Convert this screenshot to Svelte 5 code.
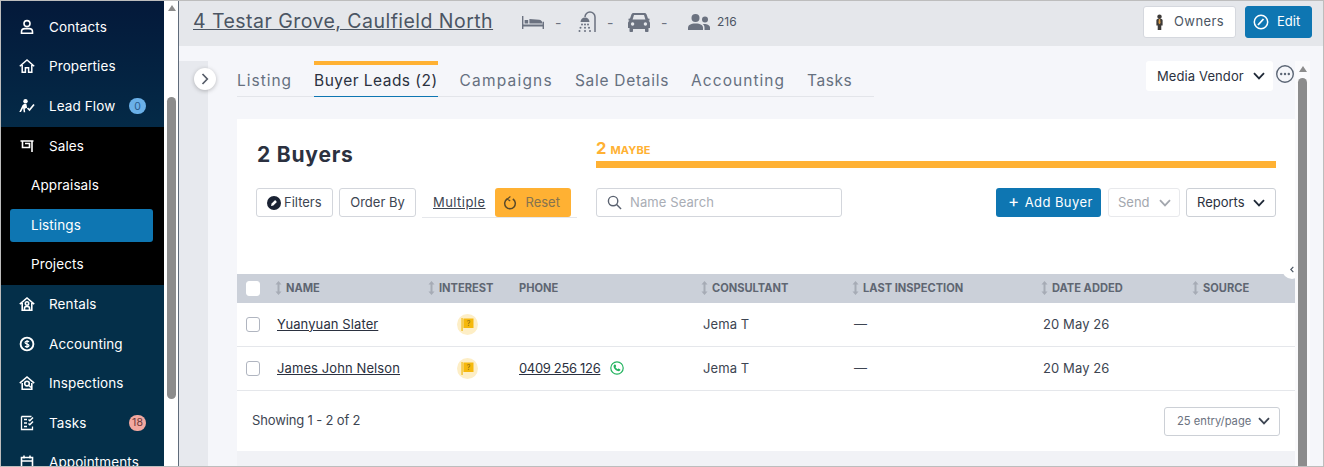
<script>
  const nav1 = [
    { label: 'Contacts', icon: 'contact' },
    { label: 'Properties', icon: 'home' },
    { label: 'Lead Flow', icon: 'lead', badge: '0', tone: 'blue' }
  ];
  const nav2 = [
    { label: 'Rentals', icon: 'rental' },
    { label: 'Accounting', icon: 'money' },
    { label: 'Inspections', icon: 'inspect' },
    { label: 'Tasks', icon: 'tasks', badge: '18', tone: 'red' },
    { label: 'Appointments', icon: 'cal' }
  ];
  const tabs = [
    { t: 'Listing', ls: 0.98 },
    { t: 'Buyer Leads (2)', ls: 0.47 },
    { t: 'Campaigns', ls: 1.2 },
    { t: 'Sale Details', ls: 0.72 },
    { t: 'Accounting', ls: 1.05 },
    { t: 'Tasks', ls: 0.55 }
  ];
  const cols = [
    { t: 'NAME', s: 1 }, { t: 'INTEREST', s: 1 }, { t: 'PHONE', s: 0 }, { t: 'CONSULTANT', s: 1 },
    { t: 'LAST INSPECTION', s: 1 }, { t: 'DATE ADDED', s: 1 }, { t: 'SOURCE', s: 1 }
  ];
  const rows = [
    { name: 'Yuanyuan Slater', phone: '' },
    { name: 'James John Nelson', phone: '0409 256 126' }
  ];
</script>

{#snippet navIcon(k)}
  <svg class="nav-ic" viewBox="0 0 16 16" fill="none" stroke="#fff" stroke-width="1.6">
    {#if k === 'contact'}
      <circle cx="8" cy="4.6" r="3"/><path d="M2.500 14.200v-1.400c0-2 1.600-3.200 3.400-3.200h4.200c1.800 0 3.400 1.200 3.400 3.200v1.400z"/>
    {:else if k === 'home'}
      <path d="M.8 8.200L8 2l7.200 6.200M3.200 7v7.200h3.200v-4.400h3.200v4.400h3.200V7" stroke-width="1.500"/>
    {:else if k === 'lead'}
      <circle cx="6.500" cy="3.300" r="2.200" fill="#fff" stroke="none"/><path d="M3.500 7.200c1-1.600 3-2 4-1l.6 3.500-2.300 1 .4 3.600H4.700l-.6-4.200L2 14H.3z" fill="#fff" stroke="none"/><path d="M8.500 10l2 2L15 6.500" stroke-width="1.700"/>
    {:else if k === 'sales'}
      <path d="M1.500 3h13M3.500 3v6.500h7V5.500H6M13 3v11"/>
    {:else if k === 'rental'}
      <path d="M.8 8.200L8 2l7.200 6.200M3.200 7v7.200h9.600V7"/><circle cx="8" cy="7.500" r="1.700"/><path d="M5.500 14v-2c0-1 1-1.500 2.500-1.500s2.500.5 2.500 1.500v2"/>
    {:else if k === 'money'}
      <circle cx="8" cy="8" r="6.400" stroke-width="1.900"/><path d="M10 5.800C9.400 5 6 4.800 6 6.600c0 1.900 4 1 4 2.900 0 1.800-3.400 1.600-4 .7M8 4v8" stroke-width="1.200"/>
    {:else if k === 'inspect'}
      <path d="M.8 8.200L8 2l7.200 6.200M3.200 8v6.200h9.600V8"/><circle cx="8" cy="8.600" r="2.300"/><path d="M10 10.500l2 2"/>
    {:else if k === 'tasks'}
      <path d="M2.500 1.500h10M2.500 1.500v13h11v-3" stroke-width="1.300"/><path d="M5 4.500h3M5 8h3M5 11.500h3" stroke-width="1.700"/><path d="M9.500 4.500l1.300 1.300L14 2.500M9.500 8.500l1.300 1.300L14 6.500" stroke-width="1.500"/>
    {:else}
      <path d="M2.500 3.500h11v10h-11zM2.500 7h11M5 1.500v3M11 1.500v3"/>
    {/if}
  </svg>
{/snippet}

{#snippet navRow(it)}
  <a class="nav-item" href="#x">
    {@render navIcon(it.icon)}
    <span class="nav-label">{it.label}</span>
    {#if it.badge}<span class="badge {it.tone}">{it.badge}</span>{/if}
  </a>
{/snippet}

{#snippet chevron(c)}
  <svg class="chev" viewBox="0 0 12 8" fill="none" stroke={c} stroke-width="1.800"><path d="M1 1.200l5 5.200 5-5.200"/></svg>
{/snippet}

{#snippet sortIc()}
  <svg class="sort" viewBox="0 0 7 14" fill="#a6abb5"><path d="M3.500 0L6.500 3.500h-2v7h2L3.500 14 .5 10.500h2v-7h-2z"/></svg>
{/snippet}

<div class="page">
  <aside class="side">
    <nav class="nav">
      <div class="g1">{#each nav1 as it}{@render navRow(it)}{/each}</div>
      <div class="g-sales">
        {@render navRow({ label: 'Sales', icon: 'sales' })}
        <a class="sub" href="#x">Appraisals</a>
        <a class="sub active" href="#x">Listings</a>
        <a class="sub" href="#x">Projects</a>
      </div>
      <div class="g2">{#each nav2 as it}{@render navRow(it)}{/each}</div>
    </nav>
    <div class="side-scroll">
      <span class="arrow"></span>
      <span class="thumb"></span>
    </div>
  </aside>

  <main class="main">
    <header class="top">
      <a class="addr" href="#x">4 Testar Grove, Caulfield North</a>
      <div class="stats">
        <svg class="st bed" viewBox="0 0 22 13" fill="#6b7280"><path d="M0 0h1.400v8.600h19.200V5.800H22V13h-1.400v-2.600H1.400V13H0z"/><path d="M2.600 4h3.600v3.400H2.600zM7.400 3l9.800.8c1.600.2 3 1.200 3.400 3.600H7.400z"/></svg>
        <span class="dash">-</span>
        <svg class="st sh" viewBox="0 0 19 21" fill="none" stroke="#6b7280" stroke-width="1.500"><path d="M18 21V6a5 5 0 0 0-10 0"/><path d="M3.500 11c0-2.800 2-4.600 4.500-4.600s4.500 1.800 4.500 4.600z" fill="#6b7280" stroke="none"/><g fill="#6b7280" stroke="none"><circle cx="5" cy="13.500" r="1"/><circle cx="8" cy="13.500" r="1"/><circle cx="11" cy="13.500" r="1"/><circle cx="3.500" cy="16.800" r="1"/><circle cx="8" cy="16.800" r="1"/><circle cx="12" cy="16.800" r="1"/><circle cx="2.500" cy="20" r="1"/><circle cx="8" cy="20" r="1"/><circle cx="13" cy="20" r="1"/></g></svg>
        <span class="dash">-</span>
        <svg class="st car" viewBox="0 0 22 19"><path fill="#6b7280" fill-rule="evenodd" d="M5.500 0h11c1 0 1.800.6 2.100 1.500L20 5.500l1.500.2v1.800l-1 .3c.9.600 1.500 1.500 1.500 2.600V15h-1.500v3.200a.8.8 0 0 1-.8.8h-1.900a.8.8 0 0 1-.8-.8V16H5v2.200a.8.8 0 0 1-.8.8H2.300a.8.8 0 0 1-.8-.8V15H0v-4.600c0-1.100.6-2 1.500-2.600l-1-.3V5.700L2 5.500l1.400-4C3.700.6 4.500 0 5.500 0zm.5 2L4.600 6.500h12.800L16 2z"/><circle cx="4.600" cy="11" r="1.700" fill="#e5e7eb"/><circle cx="17.400" cy="11" r="1.700" fill="#e5e7eb"/></svg>
        <span class="dash">-</span>
        <svg class="st ppl" viewBox="0 0 22 16" fill="#6b7280"><circle cx="7.500" cy="4" r="4"/><path d="M0 16v-2c0-3 2.500-4.500 7.500-4.500S15 11 15 14v2z"/><circle cx="17" cy="5.500" r="3"/><path d="M16.500 16v-2.500c0-1.500-.6-2.700-1.800-3.500 3.800-.4 7.300.8 7.300 3.500V16z"/></svg>
        <span class="count">216</span>
      </div>
      <div class="top-actions">
        <button class="btn owners">
          <svg class="own" viewBox="0 0 10 18" fill="#3e3b39"><circle cx="5" cy="3" r="2.500"/><path d="M1.500 7c0-1 1-1.500 2-1.500h3c1 0 2 .5 2 1.500v6H7v5H3v-5H1.500z"/><path d="M4.300 5.500h1.400l.5 4.500L5 11.500 3.800 10z" fill="#d99a45"/></svg>
          <span>Owners</span>
        </button>
        <button class="btn edit">
          <svg class="ban" viewBox="0 0 16 16" fill="none" stroke="#fff" stroke-width="1.500"><circle cx="8" cy="8" r="6.700"/><path d="M5 11l5.500-6" stroke-width="1.800"/></svg>
          <span>Edit</span>
        </button>
      </div>
    </header>

    <div class="body">
      <div class="strip"></div>
      <button class="toggle" aria-label="Expand">
        <svg viewBox="0 0 8 12" fill="none" stroke="#555c68" stroke-width="1.700"><path d="M1.500 1l4.800 5-4.800 5"/></svg>
      </button>
      <div class="content">
        <div class="tabs-row">
          <div class="tabs">
            {#each tabs as t, i}
              <a class="tab" class:on={i === 1} style="letter-spacing: {t.ls}px" href="#x">{t.t}</a>
            {/each}
          </div>
          <div class="vendor">Media Vendor {@render chevron('#1f2937')}</div>
          <svg class="dots" viewBox="0 0 20 20" fill="none" stroke="#5c6675" stroke-width="1.400"><circle cx="10" cy="10" r="8.300"/><g fill="#5c6675" stroke="none"><circle cx="6.200" cy="10" r="1.200"/><circle cx="10" cy="10" r="1.200"/><circle cx="13.800" cy="10" r="1.200"/></g></svg>
        </div>

        <section class="card">
          <div class="card-top">
            <div class="ctl-col">
              <h2>2 Buyers</h2>
              <div class="filters">
                <button class="btn-o flt">
                  <svg class="pen" viewBox="0 0 14 14"><circle cx="7" cy="7" r="7" fill="#1a2233"/><path d="M4 10l.6-2.400 3.500-3.500 1.800 1.800-3.500 3.500z" fill="#fff"/></svg>
                  <span>Filters</span>
                </button>
                <button class="btn-o order"><span>Order By</span></button>
                <div class="multi">
                  <a class="mul" href="#x">Multiple</a>
                  <button class="reset">
                    <svg class="rs" viewBox="0 0 14 14" fill="none" stroke="#5a4a2a" stroke-width="1.500"><path d="M4.200 3A5.300 5.300 0 1 0 9.800 3"/><path d="M7.400 .6L4.200 3l3 2" stroke-width="1.200"/></svg>
                    <span>Reset</span>
                  </button>
                </div>
              </div>
            </div>
            <div class="right-col">
              <div class="maybe">
                <div class="maybe-t"><b>2</b><span>MAYBE</span></div>
                <div class="maybe-bar"></div>
              </div>
              <div class="tools">
                <div class="search">
                  <svg class="mag" viewBox="0 0 16 16" fill="none" stroke="#5a6270" stroke-width="1.500"><circle cx="6.500" cy="6.500" r="5"/><path d="M10.200 10.200l4.800 4.800"/></svg>
                  <span>Name Search</span>
                </div>
                <div class="tools-r">
                  <button class="add"><span class="plus">+</span><span class="add-t">Add Buyer</span></button>
                  <button class="btn-o send"><span>Send</span> {@render chevron('#a3a7ae')}</button>
                  <button class="btn-o reports"><span>Reports</span> {@render chevron('#1f2937')}</button>
                </div>
              </div>
            </div>
          </div>

          <div class="table">
            <div class="tr head">
              <div class="cell chk"><span class="box hbox"></span></div>
              {#each cols as c}
                <div class="cell th">{#if c.s}{@render sortIc()}{/if}<span>{c.t}</span></div>
              {/each}
            </div>
            {#each rows as r}
              <div class="tr row">
                <div class="cell chk"><span class="box"></span></div>
                <div class="cell nm"><a href="#x">{r.name}</a></div>
                <div class="cell ctr">
                  <span class="flag">
                    <svg viewBox="0 0 13 13"><path d="M.5 0h1.100v13H.5z" fill="#f0b400"/><path d="M2.400 .5h10.100v9.500H2.400z" fill="#f5b80c"/><text x="7.500" y="7.800" font-size="7" text-anchor="middle" fill="#8a6a10" font-family="Inter">?</text></svg>
                  </span>
                </div>
                <div class="cell ph">
                  {#if r.phone}
                    <a href="#x">{r.phone}</a>
                    <svg class="wa" viewBox="0 0 14 14" fill="none"><circle cx="7" cy="7" r="6.200" stroke="#22b35e" stroke-width="1.200"/><path d="M4.200 3.800c.5-.5 1-.5 1.300 0l.6 1c.2.400 0 .7-.3 1l-.3.300c.4 1 1.200 1.800 2.200 2.200l.3-.3c.3-.3.600-.5 1-.3l1 .6c.5.300.5.800 0 1.300-.7.700-1.700.8-3 .2-1.300-.7-2.500-1.900-3.100-3.100-.5-1.200-.4-2.200.3-2.900z" fill="#22b35e"/></svg>
                  {/if}
                </div>
                <div class="cell tx">Jema T</div>
                <div class="cell tx">—</div>
                <div class="cell tx">20 May 26</div>
                <div class="cell"></div>
              </div>
            {/each}
          </div>

          <div class="foot">
            <span class="showing">Showing 1 - 2 of 2</span>
            <div class="pager">25 entry/page {@render chevron('#3d4552')}</div>
          </div>
          <span class="collapse">
            <svg viewBox="0 0 6 10" fill="none" stroke="#4b5563" stroke-width="1.800"><path d="M5 1L1.200 5 5 9"/></svg>
          </span>
        </section>
      </div>
      <div class="inner-scroll">
        <span class="arrow"></span>
        <span class="thumb2"></span>
      </div>
    </div>
  </main>
</div>

<style>
  :global(body) { margin: 0; background: #fff; }
  * { box-sizing: border-box; }
  a { color: inherit; }
  button { font: inherit; }

  .page {
    width: 1324px; height: 467px; overflow: hidden; display: flex;
    border: 1px solid #bdbdbd;
    font-family: Inter, "Open Sans", sans-serif; letter-spacing: .1px;
    color: #2b3140; background: #f5f6fa;
  }

  .side { width: 178px; flex: none; display: flex; border-right: 1px solid #5f6b7a; overflow: hidden; }
  .nav { width: 163px; flex: none; display: flex; flex-direction: column; background: #042f49; height: 600px; }
  .g1 { background: linear-gradient(#04193a, #042a47); padding-top: 6px; padding-bottom: 1px; }
  .g-sales { background: #000; padding-bottom: 1px; }
  .g-sales .nav-item { margin-top: -1px; }
  .g2 { background: #042f49; }
  .g2 .nav-item:first-child { margin-top: -1px; }
  .nav-item {
    height: 39.6px; display: flex; align-items: center; position: relative;
    text-decoration: none; color: #fff; font-size: 13.500px; padding-left: 18px;
  }
  .nav-ic { width: 16px; height: 16px; flex: none; margin-right: 14px; }
  .badge {
    position: absolute; left: 128px; top: 12px; width: 17px; height: 16px; border-radius: 8px;
    font-size: 10.500px; display: flex; align-items: center; justify-content: center; letter-spacing: 0;
  }
  .badge.blue { background: #6ab0e8; color: #2a5a8c; }
  .badge.red { background: #f2a8a0; color: #6e3a3a; }
  .sub {
    display: flex; align-items: center; height: 39.6px; padding-left: 30px;
    color: #fff; font-size: 13.500px; text-decoration: none;
  }
  .sub.active {
    background: #0e76b2; margin: 4px 11px 2.600px 9px; height: 33px; border-radius: 3px; padding-left: 21px;
  }
  .side-scroll { width: 14px; flex: none; background: #fff; display: flex; flex-direction: column; align-items: center; position: relative; padding-left: 1px; }
  .arrow { width: 0; height: 0; border: 4.500px solid transparent; border-top: 0; border-bottom: 6px solid #8c8c8c; margin-top: 4px; }
  .thumb { position: absolute; left: 3px; top: 96px; width: 9px; height: 302px; border-radius: 5px; background: #8c8c8c; }

  .main { flex: 1; display: flex; flex-direction: column; min-width: 0; }
  .top { height: 45px; flex: none; background: #e5e7eb; display: flex; align-items: center; padding: 0 11px 0 14px; }
  .addr { font-size: 19.500px; color: #4b5563; letter-spacing: .46px; width: 300px; white-space: nowrap; margin-bottom: 6px; }
  .stats { display: flex; align-items: center; margin-left: 29px; color: #6b7280; margin-bottom: 3px; }
  .st { flex: none; }
  .bed { width: 22px; height: 13px; }
  .sh { width: 19px; height: 21px; margin-bottom: 2px; }
  .car { width: 22px; height: 19px; margin: 0 0 0 -1px; }
  .dash { font-size: 14px; margin: 0 16px 0 11px; width: 6px; }
  .ppl { width: 22px; height: 16px; margin-left: 5px; }
  .count { font-size: 12px; color: #4b5563; margin-left: 7px; letter-spacing: 0; margin-bottom: 1px; }
  .top-actions { margin-left: auto; display: flex; gap: 9px; margin-bottom: 3px; }
  .btn { height: 32px; border-radius: 3px; display: flex; align-items: center; font-size: 13px; }
  .btn span { padding-bottom: 2px; }
  .owners { width: 93px; background: #fff; border: 1px solid #d5d8de; color: #4b5563; padding: 0 0 0 11px; gap: 10px; letter-spacing: .4px; }
  .own { width: 9px; height: 16px; }
  .edit { width: 67px; background: #0e76b2; border: 1px solid #0e76b2; color: #fff; padding: 0 0 0 7px; gap: 8px; }
  .ban { width: 16px; height: 16px; }

  .body { flex: 1; display: flex; position: relative; min-height: 0; }
  .strip { width: 29px; flex: none; background: #e7e9ee; margin-top: 15px; }
  .toggle {
    position: absolute; left: 15px; top: 22px; width: 22px; height: 22px; border-radius: 50%;
    background: #fff; border: 0; padding: 0; box-shadow: 0 1px 4px rgba(0,0,0,.25);
    display: flex; align-items: center; justify-content: center;
  }
  .toggle svg { width: 8px; height: 12px; }
  .content { width: 1087px; flex: none; min-width: 0; padding: 15px 0 0 29px; }
  .tabs-row { height: 58px; display: flex; align-items: flex-start; position: relative; }
  .tabs { display: flex; gap: 22px; height: 36px; width: 637px; border-bottom: 1px solid #e3e5ea; flex: none; }
  .tab {
    text-decoration: none; font-size: 15.500px; color: #667080; height: 36px; padding-top: 10px;
    position: relative; white-space: nowrap; line-height: 20px;
  }
  .tab.on { color: #2b3140; border-bottom: 1px solid #0e76b2; }
  .tab.on::before { content: ""; position: absolute; left: 0; right: 0; top: 0; height: 4px; background: #ffb133; }
  .vendor {
    margin-left: 272px; width: 127px; height: 30px; background: #fff; border-radius: 3px; font-size: 13px;
    display: flex; align-items: center; gap: 9px; padding-left: 11px; color: #2b3140; white-space: nowrap; flex: none;
  }
  .chev { width: 12px; height: 8px; flex: none; }
  .dots { width: 20px; height: 20px; margin: 3px 0 0 2px; flex: none; position: relative; z-index: 2; }

  .card { background: #fff; height: 332px; position: relative; box-shadow: 0 20px 0 #f1f2f6; }
  .card-top { height: 155px; display: flex; padding: 0 19px 0 19px; }
  .ctl-col { width: 340px; flex: none; }
  h2 { font-size: 21px; font-weight: 700; margin: 0; padding: 23px 0 0 1px; line-height: 26px; color: #2b3140; letter-spacing: .8px; }
  .filters { display: flex; gap: 6px; margin-top: 20px; }
  .btn-o {
    height: 29px; background: #fff; border: 1px solid #d3d6dc; border-radius: 3px;
    font-size: 13px; color: #3d4552; display: flex; align-items: center; padding: 0; white-space: nowrap;
  }
  .btn-o span, .reset span, .add-t { padding-bottom: 2px; }
  .flt { width: 77px; padding-left: 10px; gap: 3px; }
  .pen { width: 14px; height: 14px; }
  .order { width: 77px; justify-content: center; }
  .multi { display: flex; align-items: center; height: 30px; border-bottom: 1px solid #e5e7eb; padding-left: 11px; width: 155px; gap: 10px; font-size: 13px; }
  .mul { color: #3d4552; letter-spacing: .45px; padding-bottom: 2px; }
  .reset { width: 76px; height: 29px; border: 0; border-radius: 3px; background: #ffb133; color: #85734f; display: flex; align-items: center; font-size: 13px; padding-left: 8px; gap: 8px; }
  .rs { width: 14px; height: 14px; }

  .right-col { flex: 1; min-width: 0; }
  .maybe { padding-top: 20px; }
  .maybe-t { display: flex; align-items: baseline; gap: 4px; color: #ffb133; height: 21px; line-height: 18px; }
  .maybe-t b { font-size: 16.500px; }
  .maybe-t span { font-size: 11px; font-weight: 700; }
  .maybe-bar { height: 7px; background: #ffb133; margin-top: 1px; }
  .tools { display: flex; margin-top: 20px; }
  .search {
    width: 246px; height: 29px; border: 1px solid #d3d6dc; border-radius: 3px; display: flex; align-items: center;
    padding-left: 10px; gap: 8px; font-size: 13px; color: #a9adb5;
  }
  .search span { padding-bottom: 1px; }
  .mag { width: 15px; height: 15px; }
  .tools-r { margin-left: auto; display: flex; gap: 6px; }
  .add { width: 105px; height: 29px; background: #0e76b2; border: 0; border-radius: 3px; color: #fff; font-size: 13px; white-space: nowrap; padding: 0 0 0 12px; margin-right: 1px; display: flex; align-items: center; gap: 5px; letter-spacing: .42px; }
  .plus { font-size: 17px; line-height: 1; padding-bottom: 2px; }
  .send { width: 72px; color: #a3a7ae; border-color: #e8e9ec; padding-left: 9px; gap: 9px; }
  .reports { width: 90px; padding-left: 10px; gap: 8px; color: #2b3140; border-color: #ccd0d6; }

  .tr { display: grid; grid-template-columns: 38px 153px 91px 182px 151px 189px 151px 103px; align-items: center; }
  .head { height: 29px; background: #cbd0d9; }
  .row { height: 44px; border-bottom: 1px solid #e5e7eb; font-size: 13px; color: #3d4552; padding-bottom: 2px; }
  .cell { display: flex; align-items: center; min-width: 0; white-space: nowrap; }
  .chk { padding-left: 9px; }
  .row .chk { padding-top: 1px; }
  .box { width: 14px; height: 15px; border: 1px solid #b0b5c0; border-radius: 3px; background: #fff; display: block; }
  .hbox { border-color: #fff; }
  .th { font-size: 11.100px; font-weight: 700; color: #5f6672; gap: 4px; letter-spacing: 0; padding-bottom: 1px; }
  .sort { width: 7px; height: 14px; }
  .nm { padding-left: 2px; }
  .nm a, .ph a { color: #2b3140; }
  .ph a { letter-spacing: -.33px; }
  .ctr { padding-left: 29px; padding-top: 1px; }
  .flag { width: 21px; height: 21px; border-radius: 50%; background: #fdeec6; display: flex; align-items: center; justify-content: center; }
  .flag svg { width: 13px; height: 13px; }
  .ph { gap: 10px; }
  .wa { width: 14px; height: 14px; }
  .tx { padding-left: 2px; }
  .foot { display: flex; align-items: center; justify-content: space-between; height: 60px; padding: 0 15px 0 15px; font-size: 13px; color: #3d4552; }
  .showing { letter-spacing: -.15px; padding-bottom: 2px; }
  .pager {
    width: 116px; height: 29px; border: 1px solid #ccd0d6; border-radius: 3px; font-size: 11.200px; color: #6b7280;
    display: flex; align-items: center; padding-left: 12px; gap: 7px; white-space: nowrap; letter-spacing: 0;
  }
  .collapse {
    position: absolute; right: -7px; top: 140px; width: 20px; height: 20px; border-radius: 50%; background: #fff;
    display: flex; align-items: center; padding-left: 8px;
  }
  .collapse svg { width: 4px; height: 7px; }

  .inner-scroll { width: 15px; flex: none; margin-top: 15px; background: #fafafc; display: flex; flex-direction: column; align-items: center; position: relative; height: 420px; z-index: 1; }
  .inner-scroll .arrow { margin-top: 5px; }
  .thumb2 { position: absolute; left: 3px; top: 17px; width: 9px; bottom: 0; background: #8c8c8c; border-radius: 5px 5px 0 0; }
</style>
